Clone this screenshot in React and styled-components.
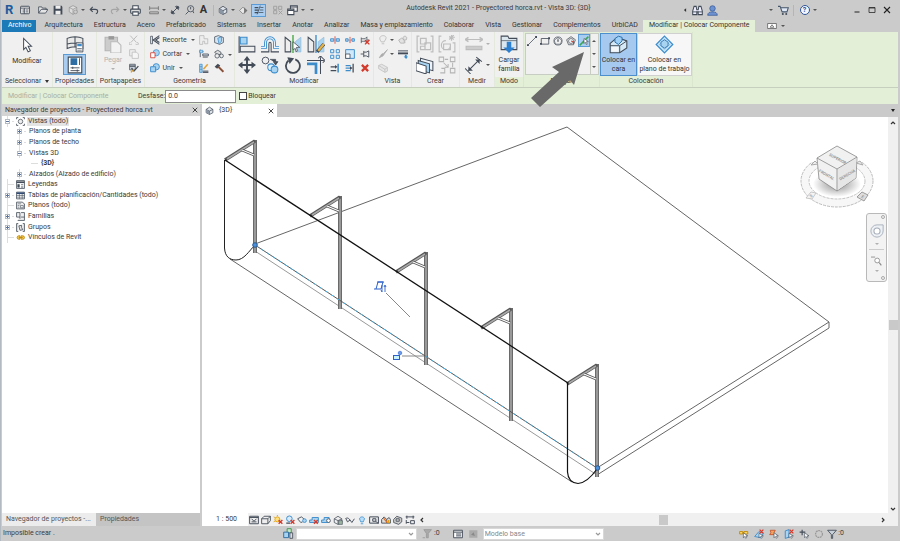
import { useState } from 'react';
import styled, { createGlobalStyle, css } from 'styled-components';

const GlobalStyle = createGlobalStyle`
  * {
    box-sizing: border-box;
  }

  body {
    margin: 0;
    background: #cbcbcb;
    color: #3a3a3a;
    font-family: Roboto, 'Open Sans', 'Liberation Sans', sans-serif;
    font-size: 7px;
    line-height: 9px;
  }

  button, input, select {
    font: inherit;
    color: inherit;
  }

  svg {
    display: block;
    flex: none;
  }
`;

const ink = '#424b57';
const blue = '#3c8ccb';
const sky = '#a8d4f2';
const mute = '#bdbdbd';
const red = '#d33a2c';

// every glyph is drawn on a 16 x 16 grid
const art = {
  window: <><rect x="1" y="2" width="14" height="12" rx="1" fill="#eee" stroke={ink} strokeWidth="1.5" /><path d="M1 5h14M4 8h3M4 11h3M9 8h4M9 11h4M7 5v9" stroke={ink} strokeWidth="1.3" /></>,
  open: <path d="M1 13V3h5l1 2h6v3M1 13l4-6h11l-4 6z" fill="#e4e4e4" stroke={ink} strokeWidth="1.3" />,
  save: <><path d="M1 1h13l1 2v12H1z" fill={ink} /><path d="M4 1h8v5H4zM4 9h8v6H4z" fill="#eee" /></>,
  sync: <><path d="M8 1l6 3v7l-6 4-6-4V4z" fill="#ddd" stroke="#888" /><path d="M2 4l6 3 6-3M8 7v8" fill="none" stroke="#888" /><circle cx="12" cy="11" r="3" fill="#ccc" stroke="#888" /></>,
  undo: <path d="M6 3L2 7l4 4M2 7h8c5 0 5 6 1 7" fill="none" stroke={ink} strokeWidth="1.8" />,
  redo: <path d="M10 3l4 4-4 4M14 7H6c-5 0-5 6-1 7" fill="none" stroke="#a4a4a4" strokeWidth="1.8" />,
  print: <><path d="M4 6V1h8v5" fill="#fff" stroke={ink} strokeWidth="1.5" /><rect x="1" y="6" width="14" height="6" rx="1" fill="#ddd" stroke={ink} strokeWidth="1.5" /><path d="M4 10h8v5H4z" fill="#fff" stroke={ink} strokeWidth="1.5" /></>,
  measure: <path d="M1 5h14M1 2v6M15 2v6M1 11h14v3H1z" fill="none" stroke="#777" strokeWidth="1.5" />,
  dimension: <><path d="M3 13L13 3" stroke={ink} strokeWidth="1.5" /><path d="M1 11l4 4M11 1l4 4" stroke={ink} strokeWidth="1.5" /><path d="M3 10v3h3zM10 3h3v3z" fill={ink} stroke={ink} strokeWidth="2" /></>,
  aligned: <><path d="M3 13L13 3" stroke={ink} strokeWidth="1" /><path d="M0 11l5 5M10 1l5 4" stroke={ink} strokeWidth=".9" /><path d="M3 9v4h4zM9 3h4v4z" fill={ink} /></>,
  tag: <><circle cx="9" cy="6" r="5" fill="none" stroke={ink} strokeWidth="1.3" /><path d="M9 3v4M6 10l-5 5M13 10l1 3" stroke={ink} strokeWidth="1.4" /></>,
  house: <><path d="M2 6l6-4 6 4v6l-6 3-6-3z" fill="#dfe4ea" stroke={ink} strokeWidth="1.3" /><path d="M2 6l6 3 6-3M8 9v6" fill="none" stroke={ink} strokeWidth="1.3" /><path d="M2 6l6 3v6l-6-3z" fill="#8b96a5" /></>,
  section: <><path d="M7 2l6 6-6 6-6-6z" fill="#e8e8e8" stroke="#777" strokeWidth="1.3" /><path d="M9 2l6 6-6 6z" fill="#777" /></>,
  thin: <><path d="M1 4h6M1 8h6M1 12h6" stroke={ink} strokeWidth="2" /><path d="M10 1L5 15M10 4h5M9 8h6M8 12h7" stroke={ink} strokeWidth="1.2" /></>,
  closeViews: <path d="M1 2h5v5H1zM9 2h5v5H9zM1 9h5v5H1zM9 9l6 6M15 9l-6 6" fill="none" stroke="#999" strokeWidth="1.3" />,
  switch: <><path d="M5 1h10v8H5z" fill="#eee" stroke={ink} strokeWidth="1.5" /><path d="M1 6h9v8H1z" fill="#fff" stroke={ink} strokeWidth="1.5" /><path d="M1 8h9M5 3h10" stroke={ink} strokeWidth="1.5" /></>,
  binoculars: <><path d="M1 9l2-7h3l1 5h2l1-5h3l2 7v5H9v-4H7v4H1z" fill="#eef" stroke={ink} strokeWidth="1.5" /><path d="M1 10h6M9 10h6" stroke={ink} strokeWidth="1.3" /></>,
  person: <><circle cx="8" cy="5" r="4" fill="#6e92cf" stroke="#2f5597" /><path d="M1 15c0-4 3-5 7-5s7 1 7 5z" fill="#6e92cf" stroke="#2f5597" /></>,
  cart: <><path d="M0 2h3l3 8h7l2-6H4" fill="#dfe8f7" stroke="#44546a" strokeWidth="1.5" /><circle cx="7" cy="13" r="1.5" fill={ink} /><circle cx="12" cy="13" r="1.5" fill={ink} /></>,
  min: <path d="M3 12h10" stroke="#222" strokeWidth="2" />,
  max: <path d="M2 3h12v10H2zM2 4h12" fill="none" stroke="#222" strokeWidth="1.5" />,
  close: <path d="M2 2l12 12M14 2L2 14" stroke="#222" strokeWidth="2.2" />,
  play: <path d="M1 4h14v8H1zM8 6l3 4H5z" fill="#fff" stroke="#555" strokeWidth="1.2" />,
  cursor: <path d="M5 3v10l2-2 2 4 2-1-2-4h3z" fill="#fff" stroke={ink} strokeWidth=".9" />,
  types: <><path d="M1 3c4-2 10-2 14 0v9c-4-2-10-2-14 0zM1 8c4-1 10-1 14 0M8 2v9" fill="#e9e9e9" stroke={ink} strokeWidth=".9" /><path d="M9 7h6v8H9z" fill="#fff" stroke={ink} strokeWidth=".8" /><path d="M10 8h4v2h-4z" fill={blue} /><path d="M10 12h4M10 13.500h4" stroke={ink} strokeWidth=".6" /></>,
  props: <><path d="M2 1h12v14H2z" fill="#fff" stroke={ink} strokeWidth="1" /><path d="M4 2h6v6H4z" fill="#2d6da3" /><path d="M12 2v6M4 10.500h8M4 13h8M6 9.500v2M10 12v2" stroke={ink} strokeWidth=".8" /></>,
  paste: <><path d="M1 2h11v12H1z" fill="#ccc" stroke="#b5b5b5" /><path d="M4 1h5v3H4z" fill="#999" /><path d="M6 6h6l3 3v7H6z" fill="#f2f2f2" stroke="#bbb" /></>,
  cut: <path d="M2 1l10 11M13 1L3 12M2 12a2 2 0 1 0 2 2M13 12a2 2 0 1 1-2 2" fill="none" stroke={mute} strokeWidth="1.6" />,
  copy: <><path d="M1 1h9v10H1z" fill="#eee" stroke={mute} strokeWidth="1.3" /><path d="M5 5h7l3 3v7H5z" fill="#f5f5f5" stroke={mute} strokeWidth="1.3" /></>,
  match: <><path d="M1 2h9v9H1z" fill="#cdd6df" stroke={ink} strokeWidth="1.2" /><path d="M1 5h9M4 8l4 5 7-8" fill="none" stroke={ink} strokeWidth="2" /><path d="M3 15l5-5" stroke="#d59a39" strokeWidth="2" /></>,
  cope: <><path d="M1 2h3v12H1z" fill="#eee" stroke={ink} strokeWidth="1.2" /><path d="M15 1L5 8l10 7M15 4L9 8l6 4" fill="none" stroke={ink} strokeWidth="1.7" /></>,
  cutGeo: <><circle cx="10" cy="6" r="5" fill={sky} stroke={blue} strokeWidth="1.2" /><path d="M1 6h7v8H1z" fill="#fff" stroke={red} strokeWidth="1.3" /></>,
  join: <><circle cx="10" cy="6" r="5" fill={sky} stroke={blue} strokeWidth="1.5" /><path d="M1 6h8v8H1z" fill={sky} stroke={blue} strokeWidth="1.5" /></>,
  opening: <path d="M1 1h7v5h6v8H9v-4H6v5H1z" fill="#eee" stroke={mute} strokeWidth="1.4" />,
  cube: <><path d="M1 3l6-2 8 3v8l-6 3-8-3z" fill="#d9e6f1" stroke={ink} strokeWidth="1.2" /><path d="M6 5l6-2v7l-4 4z" fill={sky} stroke={blue} strokeWidth="1.2" /></>,
  beam: <><path d="M2 1v12M1 4h6M6 8h9v3H6zM6 13h8" fill="#dce6ee" stroke={ink} strokeWidth="1.3" /><path d="M1 2h5v4H1z" fill={sky} stroke={blue} /></>,
  faces: <><path d="M1 5l5-3 5 3v4H5z" fill="#ddd" stroke={ink} strokeWidth="1.2" /><circle cx="5" cy="11" r="3.500" fill="#eee" stroke={ink} strokeWidth="1.2" /><circle cx="12" cy="11" r="3" fill="#eee" stroke={ink} strokeWidth="1.2" /></>,
  wall: <><path d="M1 2h4v13H1zM1 6h4M1 10h4" fill={sky} stroke={blue} strokeWidth="1.2" /><path d="M14 2L7 10" stroke="#e3a23c" strokeWidth="2.5" /><path d="M6 13h9M6 15h9" stroke={ink} strokeWidth="1.6" /></>,
  hammer: <><path d="M1 6l5-5 4 3-5 5z" fill={ink} /><path d="M7 6l8 8" stroke="#8a5038" strokeWidth="3" /></>,
  align: <><path d="M1 1v15" stroke={ink} strokeWidth="1" /><path d="M2 2h6v6H2z" fill={sky} stroke={blue} strokeWidth="1" /><path d="M2 10h13v5H2z" fill="#eee" stroke={ink} strokeWidth=".9" /></>,
  offset: <><path d="M0 11h4V7c0-6 8-6 8 0v4h4" fill="none" stroke={blue} strokeWidth="2.600" /><path d="M0 11h4V7c0-6 8-6 8 0v4h4" fill="none" stroke="#e8f4ff" strokeWidth="1" /><path d="M0 15h7V8c0-2 2-2 2 0v7h7" fill="none" stroke={ink} strokeWidth=".9" /></>,
  mirrorPick: <><path d="M1 2l5 4v9H1z" fill="#eee" stroke={ink} strokeWidth=".9" /><path d="M15 2l-5 4v9h5z" fill={sky} stroke="#9ac3de" strokeWidth=".8" /><path d="M8 0v16" stroke="#43a843" strokeWidth="1.2" /><path d="M8 6v7l2-1 1 3 1-1-1-3h3z" fill="#fff" stroke={ink} strokeWidth=".7" /></>,
  mirrorDraw: <><path d="M1 2l5 4v9H1z" fill="#eee" stroke={ink} strokeWidth=".9" /><path d="M15 2l-5 4v9h5z" fill={sky} stroke="#9ac3de" strokeWidth=".8" /><path d="M8 0v16" stroke={blue} strokeWidth="1.2" /><path d="M15 8l-6 7" stroke={ink} strokeWidth="3" /><path d="M15 8l-5 6" stroke="#e7b244" strokeWidth="2" /></>,
  move: <><path d="M8 2v12M2 8h12" stroke={ink} strokeWidth="1.7" /><path d="M8 0l3 4H5zM8 16l3-4H5zM0 8l4-3v6zM16 8l-4-3v6z" fill={ink} /></>,
  duplicate: <><circle cx="4" cy="4" r="3" fill="#eee" stroke={ink} strokeWidth=".8" /><path d="M8 3h5v3M11 5l2 3 2-3z" fill={ink} stroke={ink} strokeWidth=".7" /><circle cx="9" cy="10" r="3" fill="#dff0fd" stroke={blue} strokeWidth=".9" /><circle cx="12" cy="12" r="3" fill={sky} stroke={blue} strokeWidth=".9" /></>,
  rotate: <><path d="M10 3A6.200 6.200 0 1 1 4 4" fill="none" stroke={ink} strokeWidth="1.6" /><path d="M3 1l6 1-4 5z" fill={ink} /></>,
  trim: <><path d="M0 4h12v12" fill="none" stroke={ink} strokeWidth=".9" /><path d="M0 7h8v9" fill="none" stroke={blue} strokeWidth="2.4" /><path d="M12 4V1M10 2l2-2 2 2M12 4h3M14 2l2 2-2 2" fill="none" stroke={ink} strokeWidth=".9" /></>,
  split: <><path d="M1 6h5v4H1zM10 6h5v4h-5z" fill={sky} stroke={blue} strokeWidth="1.4" /><path d="M8 2v12" stroke={red} strokeWidth="1.3" /></>,
  splitGap: <><path d="M1 6h4v4H1zM11 6h4v4h-4z" fill={sky} stroke={blue} strokeWidth="1.4" /><path d="M8 3v3M8 9v4M6 8h4" stroke={red} strokeWidth="1.4" /></>,
  unpin: <><path d="M2 4v9M2 6h6l3-3v10l-3-3H2M11 8h4" fill="#eee" stroke={ink} strokeWidth="1.2" /><path d="M8 8l7 7M15 8l-7 7" stroke={red} strokeWidth="2.2" /></>,
  array: <path d="M1 1h5v5H1zM10 1h5v5h-5zM1 10h5v5H1zM10 10h5v5h-5z" fill="#e7f3fb" stroke={blue} strokeWidth="1.5" />,
  scale: <><path d="M1 1h14v14H1z" fill="#cfe8fa" stroke={blue} strokeWidth="1.5" /><path d="M1 8h7v7H1z" fill="#fff" stroke={ink} strokeWidth="1.3" /></>,
  pin: <path d="M1 8h5M6 3v10M6 5h4l4-2v10l-4-2H6" fill="#eee" stroke={ink} strokeWidth="1.4" />,
  extend: <><path d="M1 6h9M1 12h9" stroke={ink} strokeWidth="2" /><path d="M13 1v14" stroke={blue} strokeWidth="2.4" /><path d="M8 9l4-3-4-3z" fill={ink} /></>,
  extendMany: <><path d="M1 4h8M1 8h8M1 12h8" stroke={blue} strokeWidth="2" /><path d="M13 1v14" stroke={ink} strokeWidth="2" /><path d="M8 11l4-3-4-3z" fill={ink} /></>,
  remove: <path d="M3 3l10 10M13 3L3 13" stroke={red} strokeWidth="3.600" />,
  bulb: <path d="M5 11c0-2-3-3-2-7 2-4 9-4 10 0 0 4-3 5-3 7zM6 14h4" fill="#eee" stroke={mute} strokeWidth="1.4" />,
  hidden: <path d="M1 8l5-3 4 3v5H4zM8 5c0-4 6-4 6 0l-1 3h-4zM11 10v3" fill="#e3e3e3" stroke="#b5b5b5" strokeWidth="1.4" />,
  brush: <path d="M15 1l-6 6-3 1-4 6 6-3 2-3z" fill="#aaa" stroke="#b0b0b0" strokeWidth="1.4" />,
  linework: <><path d="M0 3h16" stroke={ink} strokeWidth="1.500" /><path d="M0 7h16" stroke={ink} strokeWidth="3" /><path d="M11 9h3v3h2l-3 4-4-4h2z" fill={blue} /></>,
  boxes: <path d="M1 4l5-2 9 5v6l-4 2-10-6zM1 4l10 6v5M11 10l4-3" fill="#e6e6e6" stroke={mute} strokeWidth="1.2" />,
  group: <path d="M3 1H1v14h2M13 1h2v14h-2M4 3h5v5H4zM4 10h4v3H4zM8 7h5v6H8z" fill="none" stroke={mute} strokeWidth="1.1" />,
  groupGear: <path d="M3 1H1v14h2M13 7h2v8h-2M7 5a4 4 0 1 0 4 4M10 2h5M12 0v5M10 1l4 3M14 0l-4 4M5 8h6v5H5z" fill="none" stroke={mute} strokeWidth="1" />,
  assembly: <><path d="M4 2l11 3v8L4 10z" fill="#edf3f8" stroke={ink} strokeWidth=".9" /><path d="M2 4l10 3v8L2 12z" fill={sky} stroke={ink} strokeWidth=".9" /><path d="M0 6l9 3v7l-9-3z" fill="#fff" stroke={ink} strokeWidth=".9" /></>,
  parts: <path d="M1 1h4v4H1zM11 1h4v4h-4zM11 11h4v4h-4zM6 3h3M5 6l4 4M9 7v3H6M13 6v4M3 11h3v4H2" fill="none" stroke="#b4b4b4" strokeWidth=".9" />,
  rule: <path d="M0 4h16M3 2L0 4l3 2M13 2l3 2-3 2M1 10h14v3H1z" fill="#ccc" stroke={mute} strokeWidth="1" />,
  load: <><path d="M1 1h6l1 2h7v10H1z" fill="#dbe6ee" stroke={ink} strokeWidth=".9" /><path d="M1 5h14" stroke={ink} strokeWidth=".6" /><path d="M6 6h4v5h3l-5 5-5-5h3z" fill="#2d7fd0" /></>,
  line: <><path d="M2 14L14 2" stroke={ink} strokeWidth="1.2" /><path d="M0 13h3v3H0zM13 0h3v3h-3z" fill={ink} /></>,
  rect: <><path d="M2 4h12v9H2z" fill="none" stroke={ink} strokeWidth="1.3" /><path d="M0 11h3v3H0zM13 2h3v3h-3z" fill={ink} /></>,
  polyIn: <><circle cx="8" cy="8" r="6.500" fill="none" stroke={ink} strokeWidth="1.1" /><path d="M8 2l6 5-2 6H4L2 7z" fill="none" stroke={ink} strokeWidth=".9" /><path d="M8 4v5M7 8h2" stroke={ink} strokeWidth="1.4" /></>,
  polyOut: <><path d="M8 1l7 5-3 8H4L1 6z" fill="none" stroke={ink} strokeWidth="1.2" /><circle cx="8" cy="8" r="4" fill="none" stroke={ink} /><path d="M8 8l5 2M12 9v4" stroke={red} strokeWidth="1.6" /></>,
  pick: <><path d="M1 15L15 1" stroke="#3aa655" strokeWidth="2.4" /><path d="M8 4v8l2-2 2 4 1-1-1-4h3z" fill="#fff" stroke={ink} strokeWidth="1" /></>,
  face: <><path d="M1 7l6-5 8 3v6l-6 4H1z" fill="#d5e8f6" stroke={ink} strokeWidth=".9" /><path d="M1 9h8l6-4M9 9v6" fill="none" stroke={ink} strokeWidth=".8" /><path d="M2 10h6v4H2z" fill="#f4f6f8" /><path d="M5 3l3-2 3 1v3L8 8 5 6z" fill="#9fd0f7" stroke="#286fae" strokeWidth=".8" /></>,
  plane: <><path d="M8 1l7 7-7 7-7-7z" fill="#c3e3f8" stroke={blue} strokeWidth="1" /><path d="M8 4l4 4-4 4-4-4z" fill="#e8f5ff" stroke="#69a8d6" strokeWidth=".7" /><path d="M5 6l3-2 3 2v3l-3 2-3-2z" fill={sky} stroke="#286fae" strokeWidth=".7" /></>,
  views: <><circle cx="8" cy="8" r="4" fill="#eee" stroke={ink} strokeWidth="1.3" /><path d="M1 4V1h3M12 1h3v3M15 12v3h-3M4 15H1v-3" fill="none" stroke={ink} strokeWidth="1.4" /></>,
  legend: <><path d="M1 1h14v14H1z" fill="#fff" stroke={ink} strokeWidth="1.4" /><path d="M1 4h14" stroke={ink} strokeWidth="3" /><path d="M3 8h3v5H3zM9 8h4M9 11h4M9 13h4" fill={ink} stroke={ink} /></>,
  table: <><path d="M1 2h14v12H1z" fill="#fff" stroke={ink} strokeWidth="1.4" /><path d="M1 4h14" stroke="#2f4c77" strokeWidth="3" /><path d="M1 8h14M1 11h14M6 4v10M11 4v10" stroke={ink} /></>,
  sheet: <><path d="M1 2h10l4 3v9H1z" fill="#eee" stroke={ink} strokeWidth="1.4" /><path d="M3 5h6M8 8h5v4H8zM3 8h3M3 11h3" fill="none" stroke={ink} /></>,
  family: <path d="M1 1h6v8H1zM9 1h6v14H3M9 9h6M7 12V9" fill="#eee" stroke={ink} strokeWidth="1.4" />,
  groups: <path d="M4 1H1v14h3M12 1h3v14h-3M5 5l5-1v4l2 4-5 1z" fill="#e3e3e3" stroke={ink} strokeWidth="1.4" />,
  link: <path d="M5 5h2v6H5a3 3 0 0 1 0-6zM9 5h3a3 3 0 0 1 0 6H9zM5 8h7" fill="#f6cf4e" stroke="#c08a12" strokeWidth="1.700" />,
  detail: <><path d="M1 2h14v12H1z" fill="#eee" stroke={ink} strokeWidth="1.5" /><path d="M1 4h14M4 6l4 4 4-4M4 11h8" fill="none" stroke={ink} strokeWidth="1.5" /></>,
  style: <path d="M1 6l4-4h10v7l-4 5H1zM1 6h10v8M11 6l4-4" fill="#eee" stroke={ink} strokeWidth="1.4" />,
  sun: <><circle cx="7" cy="7" r="4" fill="#ffe27a" stroke="#e0a21b" strokeWidth="1.5" /><path d="M7 0v2M1 3l2 1M1 11l2-1" stroke="#e0a21b" strokeWidth="1.5" /><path d="M9 8l6 6M15 8l-6 6" stroke={red} strokeWidth="2.2" /></>,
  shadow: <><circle cx="7" cy="6" r="4.500" fill="#d7ecfa" stroke={blue} strokeWidth="1.5" /><path d="M2 13h6" stroke={ink} strokeWidth="2" /><path d="M9 8l6 6M15 8l-6 6" stroke={red} strokeWidth="2.2" /></>,
  crop: <><path d="M1 6l6-3 4 3v3M1 6l5 6 3-1" fill="none" stroke={ink} strokeWidth="1.4" /><circle cx="12" cy="9" r="3" fill={sky} stroke={blue} strokeWidth="1.3" /></>,
  cropOff: <><path d="M1 12V8h4V4h10v8z" fill={sky} stroke={blue} strokeWidth="1.5" /><path d="M8 8l6 6M14 8l-6 6" stroke={red} strokeWidth="2.2" /></>,
  cropOn: <><path d="M1 12V8h4V4h8v8z" fill={sky} stroke={blue} strokeWidth="1.5" /><circle cx="12" cy="9" r="3" fill="#fff" stroke={ink} strokeWidth="1.3" /></>,
  lock3d: <><path d="M2 6l6-4 6 4v6l-6 3-6-3zM2 6l6 3 6-3M8 9v6" fill="#eee" stroke={ink} strokeWidth="1.2" /><path d="M9 9h6v6H9z" fill="#9cb6a0" stroke={ink} /></>,
  glasses: <path d="M1 5l3 6 4-3 3 4 4-6M2 5c2-1 5 1 6 3" fill="none" stroke={ink} strokeWidth="1.5" />,
  reveal: <path d="M6 11c0-2-2-3-2-5 1-4 7-4 8 0 0 2-2 3-2 5zM6 14h4" fill="#b8defa" stroke={blue} strokeWidth="1.3" />,
  camera: <><path d="M1 3h14v10H1z" fill="#eee" stroke={ink} strokeWidth="1.6" /><path d="M6 6h5v4H6zM11 10l4 4" fill="none" stroke={ink} strokeWidth="1.6" /></>,
  analytic: <><path d="M1 13V7l4-4 4 4v6zM9 7l4-3 2 3v6H9" fill="#ddd" stroke={ink} strokeWidth="1.4" /><path d="M4 5l6 7" stroke="#e36d22" strokeWidth="2" /><path d="M12 8v5" stroke="#e0a21b" strokeWidth="2" /></>,
  dispSet: <path d="M1 7l5-5 8 3v6l-5 4-8-3zM5 6h5v4H5z" fill="#ccc" stroke={ink} strokeWidth="1.3" />,
  constraints: <path d="M1 3h14M3 1v5M13 1v5M2 8v6M2 12h5M9 9h6v5H9z" fill="none" stroke={ink} strokeWidth="1.5" />,
  workset: <><path d="M6 1h6v6H6z" fill="#c7e9c9" stroke="#39914a" strokeWidth="1.3" /><path d="M1 6h7v8H1z" fill={sky} stroke="#28679e" strokeWidth="1.3" /><path d="M10 7h4v8h-4z" fill="#ddd" stroke={ink} strokeWidth="1.2" /></>,
  editable: <path d="M3 1h12l-5 6v7H7V7zM1 14h4" fill="#aaa" stroke="#999" strokeWidth="1.4" />,
  option: <><path d="M1 2h14v12H1z" fill="#fff" stroke={ink} strokeWidth="1.5" /><path d="M1 5h14M5 8h8M5 11h8" stroke={ink} strokeWidth="1.6" /></>,
  optionOff: <><path d="M2 2h13v12H2z" fill="#aaa" /><path d="M5 9l4-4 2 6z" fill="#888" /></>,
  selLink: <><path d="M1 4h5v4H1zM8 4h6v4H8z" fill="#ffd860" stroke="#c18d13" strokeWidth="1.5" /><path d="M7 6v8l2-2 2 3 1-1-1-3h3z" fill="#fff" stroke={ink} /></>,
  selUnder: <><path d="M1 12L8 4l7 3-4 7z" fill={sky} stroke={blue} strokeWidth="1.4" /><path d="M9 1l6 6M15 1L9 7" stroke={red} strokeWidth="2" /><path d="M8 7v7l2-2 2 3 1-1-1-3h3z" fill="#fff" stroke={ink} /></>,
  selPin: <><path d="M2 2h8l-2 4 2 3H1l2-3z" fill="#f5a35c" stroke="#c3502a" strokeWidth="1.3" /><path d="M8 6v8l2-2 2 3 1-1-1-3h3z" fill="#fff" stroke={ink} /></>,
  selFace: <><path d="M2 3l6-2v12l-6 2z" fill={sky} stroke={blue} strokeWidth="1.5" /><path d="M9 1l6 6M15 1L9 7" stroke={red} strokeWidth="2" /><path d="M8 7v7l2-2 2 3 1-1-1-3h3z" fill="#fff" stroke={ink} /></>,
  drag: <><path d="M5 1v9M1 5h9" stroke={ink} strokeWidth="1.8" /><path d="M9 6v8l2-2 2 3 1-1-1-3h3z" fill="#fff" stroke={ink} /></>,
  ring: <circle cx="8" cy="8" r="5.500" fill="none" stroke="#999" strokeWidth="2" strokeDasharray="3 1" />,
  filter: <path d="M1 2h14L9 9v6H7V9z" fill="#c8d1da" stroke={ink} strokeWidth="1.4" />,
  wheel: <><path d="M8 1h7v7a7 7 0 1 1-7-7z" fill="#edf0f4" stroke="#a4acb8" /><circle cx="8" cy="8" r="3.500" fill="#fff" stroke="#a4acb8" strokeWidth="1.2" /></>,
  zoom: <><path d="M0 3h6" stroke="#999" strokeWidth="1.5" /><circle cx="9" cy="8" r="3.500" fill="#fff" stroke="#888" strokeWidth="1.2" /><path d="M12 11l3 4" stroke="#888" strokeWidth="1.6" /></>,
  left: <path d="M11 3v10L5 8z" fill="#333" />,
};

const Icon = ({ name, size = 10 }) => (
  <svg width={size} height={size} viewBox="0 0 16 16" fill="none" aria-hidden="true">{art[name]}</svg>
);

const Window = styled.div`
  min-height: 100vh;
  display: flex;
  flex-direction: column;
  padding: 0 2px 0 1px;
  border-left: 1px solid #b4bac2;
`;

const TitleBar = styled.header`
  height: 20px;
  display: flex;
  align-items: center;
  padding: 0 4px 0 3px;
`;

const TitleText = styled.h1`
  flex: 1;
  margin: 0;
  padding-bottom: 3px;
  text-align: center;
  font-size: 7px;
  line-height: 9px;
  font-weight: 400;
  white-space: nowrap;
`;

const Tools = styled.div`
  display: flex;
  align-items: center;
`;

const ToolButton = styled.button`
  display: flex;
  align-items: center;
  justify-content: center;
  width: ${(p) => p.$w || 15}px;
  height: ${(p) => p.$h || 14}px;
  padding: 0;
  border: 1px solid ${(p) => (p.$on ? '#5b9bd5' : 'transparent')};
  background: ${(p) => (p.$on ? '#a9cdf0' : 'none')};
  color: ${(p) => (p.disabled ? '#b0b0b0' : '#333')};
`;

const Logo = styled.strong`
  width: 14px;
  color: #1c5c9e;
  font-size: 13px;
  line-height: 14px;
`;

const BigLetter = styled.span`
  font-size: 11px;
  line-height: 12px;
  font-weight: 700;
`;

const Gap = styled.span`
  width: ${(p) => p.$w}px;
`;

const Separator = styled.span`
  width: 1px;
  height: 11px;
  background: #b5b5b5;
`;

const Caret = styled.span`
  width: 0;
  height: 0;
  margin: 0 auto;
  border: 2px solid transparent;
  border-top-color: ${(p) => (p.$muted ? '#b0b0b0' : '#555')};
  border-bottom: 0;
`;

const CaretUp = styled(Caret)`
  border-bottom: 2px solid #555;
  border-top: 0;
`;

const CaretBox = styled.span`
  display: flex;
  width: ${(p) => p.$w || 6}px;
`;

const InlineCaret = styled.span`
  display: inline-block;
  margin-left: 2px;
  border: 2px solid transparent;
  border-top: 3px solid #333;
  border-bottom: 0;
  vertical-align: middle;
`;

const TabCaret = styled(InlineCaret)`
  border-top-color: #222;
  outline: 0;
`;

const HelpBadge = styled.span`
  width: 10px;
  height: 10px;
  border: 1px solid #2f5597;
  border-radius: 5px;
  background: #f3f7ff;
  color: #1f4e9c;
  font-weight: 700;
  line-height: 8px;
  text-align: center;
`;

const TabBar = styled.nav`
  display: flex;
  height: 12px;
`;

const Tab = styled.a`
  padding: 1px 5px 0 6px;
  margin-right: ${(p) => (p.$file ? 2 : 0)}px;
  color: ${(p) => (p.$file ? '#fff' : '#333')};
  background: ${(p) => (p.$file ? '#1d7ab8' : p.$active ? '#e3efd7' : 'none')};
  text-decoration: none;
  white-space: nowrap;
`;

const Ribbon = styled.section`
  display: flex;
  height: 56px;
  background: #e3efd7;
  border-bottom: 1px solid #c6cfbd;
`;

const PanelBox = styled.div`
  width: ${(p) => p.$w}px;
  display: flex;
  flex-direction: column;
  border-right: 1px solid ${(p) => (p.$green ? '#dae6ce' : '#e3e9dd')};
  background: ${(p) => (p.$green ? '#e3efd7' : '#f0f0f0')};
`;

const PanelBody = styled.div`
  height: 45px;
  padding-top: 1px;
  display: flex;
  justify-content: center;
  background: ${(p) => (p.$green && !p.$flat ? '#f0f0f0' : 'none')};
`;

const PanelLabel = styled.div`
  text-align: center;
  white-space: nowrap;
`;

const Column = styled.div`
  display: flex;
  flex-direction: column;
  align-items: ${(p) => p.$align || 'center'};
`;

const IconGrid = styled.div`
  display: grid;
  grid-template-columns: repeat(${(p) => p.$cols}, ${(p) => p.$cell}px);
  grid-auto-rows: ${(p) => p.$row}px;
`;

const LargeButton = styled.button`
  display: flex;
  flex-direction: column;
  align-items: center;
  width: ${(p) => p.$w}px;
  height: 43px;
  padding: 1px 0 0;
  gap: ${(p) => p.$gap || 2}px;
  border: 1px solid transparent;
  background: none;
  color: ${(p) => (p.disabled ? '#b0b0b0' : '#333')};
  white-space: nowrap;

  ${(p) => p.$place && css`
    border-color: ${p.$on ? '#4c8fcf' : '#d0d0d0'};
    background: ${p.$on ? '#a6caef' : '#f7f7f7'};
  `}
`;

const RowButton = styled.button`
  display: flex;
  align-items: center;
  gap: 3px;
  width: 50px;
  height: 14px;
  padding: 0 0 0 3px;
  border: 0;
  background: none;
`;

const Gallery = styled.div`
  display: flex;
  width: 74px;
  height: 42px;
  border: 1px solid #c8cdc4;
  background: #f0f0f0;
`;

const GalleryItems = styled.div`
  flex: 1;
  display: flex;
`;

const GalleryScroll = styled.div`
  display: grid;
  grid-template-rows: repeat(3, 1fr);
  width: 9px;
  border-left: 1px solid #c8cdc4;
`;

const Arrow = styled.svg`
  position: absolute;
  left: 530px;
  top: 52px;
  pointer-events: none;
`;

const OptionsBar = styled.form`
  display: flex;
  align-items: center;
  height: 16px;
  background: #e3efd7;
  padding-left: 6px;
`;

const Context = styled.span`
  width: 130px;
  color: #a9aea4;
`;

const OffsetField = styled.input`
  width: 71px;
  height: 13px;
  margin-right: 3px;
  padding: 0 2px;
  border: 1px solid #8a8a8a;
  background: #fff;
`;

const Check = styled.input`
  appearance: none;
  width: 8px;
  height: 8px;
  margin: 0 1px 0 0;
  border: 1px solid #444;
  background: #fff;
`;

const Workspace = styled.main`
  flex: 1;
  display: flex;
  gap: 2px;
`;

const Browser = styled.aside`
  width: 198px;
  display: flex;
  flex-direction: column;
  background: #fff;
`;

const BrowserHead = styled.div`
  display: flex;
  justify-content: space-between;
  align-items: center;
  height: 12px;
  padding: 0 0 0 3px;
  background: #d4d4d4;
`;

const Tree = styled.ul`
  display: grid;
  grid-auto-rows: 1fr;
  height: 127px;
  margin: 0;
  padding: 0 0 0 2px;
  list-style: none;
`;

const TreeRow = styled.li`
  display: flex;
  align-items: center;
  font-weight: ${(p) => (p.$bold ? 700 : 400)};
`;

const Branch = styled.span`
  display: flex;
  align-items: center;
  align-self: stretch;
  width: 12px;
  padding-left: 1px;
  background: ${(p) => (p.$line ? 'linear-gradient(#ddd, #ddd) 3px 0 / 1px 100% no-repeat' : 'none')};

  &::after {
    content: '';
    flex: 1;
    height: 1px;
    margin: 0 2px;
    background: ${(p) => (p.$dash ? '#ddd' : 'none')};
  }
`;

const Toggle = styled.button`
  width: 5px;
  height: 5px;
  padding: 0;
  border: 1px solid #b4bac2;
  background:
    linear-gradient(#5a7396, #5a7396) center / 3px 1px no-repeat,
    ${(p) => (p.$open ? '' : 'linear-gradient(#5a7396, #5a7396) center / 1px 3px no-repeat,')}
    linear-gradient(#fff, #fff);
`;

const TreeLabel = styled.span`
  padding: 0 1px;
  margin-left: ${(p) => (p.$icon ? 2 : 0)}px;
  background: ${(p) => (p.$selected ? '#e4e4e4' : 'none')};
  white-space: nowrap;
`;

const PaneTabs = styled.div`
  display: flex;
  height: 13px;
  margin-top: auto;
  background: #c4c4c4;
`;

const PaneTab = styled.button`
  padding: 0 4px;
  width: ${(p) => (p.$on ? 94 : 60)}px;
  border: 0;
  background: ${(p) => (p.$on ? '#ececec' : 'none')};
  color: #555;
  text-align: left;
  white-space: nowrap;
`;

const ViewArea = styled.section`
  flex: 1;
  display: flex;
  flex-direction: column;
  min-width: 0;
`;

const ViewTabs = styled.div`
  display: flex;
  align-items: center;
  justify-content: space-between;
  height: 13px;
  background: #cacaca;
`;

const ViewTab = styled.div`
  display: flex;
  align-items: center;
  gap: 5px;
  width: 75px;
  height: 13px;
  padding-left: 3px;
  background: #fff;

  button {
    margin-left: auto;
  }
`;

const ViewBody = styled.div`
  flex: 1;
  display: flex;
  min-height: 0;
`;

const Canvas = styled.div`
  position: relative;
  flex: 1;
  display: flex;
  background: #fff;
`;

const Drawing = styled.svg`
  flex: 1;
  min-width: 0;
`;

const NavBar = styled.div`
  position: absolute;
  right: 1px;
  top: 96px;
  width: 21px;
  height: 69px;
  display: flex;
  flex-direction: column;
  align-items: center;
  justify-content: space-between;
  padding: 1px;
  border: 1px solid #b9b9b9;
  border-radius: 3px;
  background: #f3f3f3;
`;

const NavDot = styled.span`
  align-self: flex-end;
  width: 4px;
  height: 4px;
  border: 1px solid #aaa;
  border-radius: 2px;
`;

const NavRule = styled.span`
  width: 15px;
  height: 1px;
  background: #ccc;
`;

const ScrollColumn = styled.div`
  width: 10px;
  display: flex;
  flex-direction: column;
  align-items: center;
  padding: 3px 0 1px;
  background: #f0f0f0;
`;

const Thumb = styled.span`
  width: 9px;
  height: 10px;
  background: #c9c9c9;
`;

const Chevron = ({ turn = 0, color = '#333' }) => (
  <svg width="6" height="6" viewBox="0 0 6 6"><path d="M1 2l2 2 2-2" fill="none" stroke={color} strokeWidth="1.200" transform={`rotate(${turn} 3 3)`} /></svg>
);

const ViewControls = styled.div`
  display: flex;
  align-items: center;
  height: 13px;
  padding: 0 12px 0 0;
  background: #f0f0f0;
`;

const Scale = styled.button`
  width: 46px;
  height: 13px;
  padding: 0 11px 0 0;
  border: 0;
  background: #fff;
  text-align: right;
  white-space: nowrap;
`;

const ScrollTrack = styled.div`
  flex: 1;
  display: flex;
  align-items: center;
`;

const StatusBar = styled.footer`
  display: flex;
  align-items: center;
  height: 15px;
  padding: 0 52px 0 1px;
`;

const Message = styled.span`
  width: 278px;
`;

const SelectBox = styled.div`
  display: flex;
  align-items: center;
  width: 121px;
  height: 12px;
  padding-right: 2px;
  background: #fff;
  border: 1px solid #d8d8d8;

  select {
    flex: 1;
    height: 10px;
    padding: 0 1px;
    border: 0;
    appearance: none;
    background: none;
    color: #888;
    line-height: 10px;
  }
`;

const Push = styled.span`
  flex: ${(p) => p.$grow || 1};
`;

const Tool = ({ name, size, ...rest }) => (
  <ToolButton type="button" aria-label={name} {...rest}><Icon name={name} size={size} /></ToolButton>
);

const Panel = ({ label, w, green, flat, children }) => (
  <PanelBox $w={w} $green={green}>
    <PanelBody $green={green} $flat={flat}>{children}</PanelBody>
    <PanelLabel>{label}</PanelLabel>
  </PanelBox>
);

const tabs = ['Arquitectura', 'Estructura', 'Acero', 'Prefabricado', 'Sistemas', 'Insertar', 'Anotar', 'Analizar',
  'Masa y emplazamiento', 'Colaborar', 'Vista', 'Gestionar', 'Complementos', 'UrbiCAD'];

const tree = [
  { label: 'Vistas (todo)', icon: 'views', toggle: 'open', selected: true },
  { label: 'Planos de planta', depth: 1, toggle: 'closed' },
  { label: 'Planos de techo', depth: 1, toggle: 'closed' },
  { label: 'Vistas 3D', depth: 1, toggle: 'open' },
  { label: '{3D}', depth: 2, bold: true },
  { label: 'Alzados (Alzado de edificio)', depth: 1, toggle: 'closed' },
  { label: 'Leyendas', icon: 'legend' },
  { label: 'Tablas de planificación/Cantidades (todo)', icon: 'table', toggle: 'closed' },
  { label: 'Planos (todo)', icon: 'sheet' },
  { label: 'Familias', icon: 'family', toggle: 'closed' },
  { label: 'Grupos', icon: 'groups', toggle: 'closed' },
  { label: 'Vínculos de Revit', icon: 'link' },
];

const viewTools = ['detail', 'style', 'sun', 'shadow', 'crop', 'cropOff', 'cropOn', 'lock3d', 'glasses', 'reveal',
  'camera', 'analytic', 'dispSet', 'constraints'];

const TitleRow = () => (
  <TitleBar>
    <Tools>
      <Logo>R</Logo>
      <Tool name="window" $w={12} />
      <Gap $w={4} />
      <Tool name="open" />
      <Tool name="save" />
      <Tool name="sync" disabled />
      <CaretBox $w={6}><Caret /></CaretBox>
      <Tool name="undo" />
      <CaretBox $w={6}><Caret /></CaretBox>
      <Tool name="redo" disabled />
      <CaretBox $w={6}><Caret /></CaretBox>
      <Tool name="print" size={11} />
      <Gap $w={3} />
      <Tool name="measure" />
      <CaretBox $w={6}><Caret /></CaretBox>
      <Tool name="dimension" />
      <Tool name="tag" />
      <ToolButton type="button" $w={13}><BigLetter>A</BigLetter></ToolButton>
      <Gap $w={3} />
      <Separator />
      <Gap $w={1} />
      <Tool name="house" />
      <CaretBox $w={6}><Caret /></CaretBox>
      <Tool name="section" size={9} />
      <Tool name="thin" $on $h={13} />
      <Gap $w={4} />
      <Tool name="closeViews" />
      <Tool name="switch" size={11} />
      <CaretBox><Caret /></CaretBox>
      <Gap $w={3} />
      <CaretBox><Caret /></CaretBox>
    </Tools>
    <TitleText>Autodesk Revit 2021 - Proyectored horca.rvt - Vista 3D: {'{3D}'}</TitleText>
    <Tools>
      <Icon name="left" size={6} />
      <Gap $w={2} />
      <Tool name="binoculars" size={11} />
      <Tool name="person" size={11} />
      <Gap $w={48} />
      <CaretBox><Caret /></CaretBox>
      <Gap $w={2} />
      <Tool name="cart" size={11} />
      <Gap $w={2} />
      <Separator />
      <Gap $w={3} />
      <ToolButton type="button"><HelpBadge>?</HelpBadge></ToolButton>
      <CaretBox><Caret /></CaretBox>
      <Gap $w={31} />
      <Tool name="min" size={8} />
      <Tool name="max" size={8} />
      <Tool name="close" size={8} />
    </Tools>
  </TitleBar>
);

const RibbonBar = () => (
  <Ribbon>
    <Panel label={<>Seleccionar <InlineCaret /></>} w={51}>
      <LargeButton type="button" $w={44} $gap={4}><Icon name="cursor" size={18} />Modificar</LargeButton>
    </Panel>
    <Panel label="Propiedades" w={44}>
      <Column>
        <Tool name="types" size={18} $w={22} $h={21} />
        <Tool name="props" size={18} $w={23} $h={21} $on />
      </Column>
    </Panel>
    <Panel label="Portapapeles" w={48}>
      <LargeButton type="button" $w={26} $gap={3} disabled>
        <Icon name="paste" size={18} />Pegar<Caret $muted />
      </LargeButton>
      <IconGrid $cols={1} $cell={15} $row={14}>
        <Tool name="cut" disabled />
        <Tool name="copy" disabled />
        <Tool name="match" />
      </IconGrid>
    </Panel>
    <Panel label="Geometría" w={90}>
      <Column $align="flex-start">
        <RowButton type="button"><Icon name="cope" />Recorte<CaretBox><Caret /></CaretBox></RowButton>
        <RowButton type="button"><Icon name="cutGeo" />Cortar<CaretBox><Caret /></CaretBox></RowButton>
        <RowButton type="button"><Icon name="join" />Unir<CaretBox><Caret /></CaretBox></RowButton>
      </Column>
      <IconGrid $cols={2} $cell={15} $row={14}>
        <Tool name="opening" disabled />
        <Tool name="cube" />
        <Tool name="beam" />
        <Tool name="faces" />
        <Tool name="wall" />
        <Tool name="hammer" />
      </IconGrid>
      <Tools><CaretBox><Caret /></CaretBox></Tools>
    </Panel>
    <Panel label="Modificar" w={139}>
      <IconGrid $cols={4} $cell={23} $row={21}>
        {['align', 'offset', 'mirrorPick', 'mirrorDraw', 'move', 'duplicate', 'rotate', 'trim'].map((n) => (
          <Tool key={n} name={n} size={18} $w={23} $h={21} />
        ))}
      </IconGrid>
      <IconGrid $cols={3} $cell={15} $row={14}>
        {['split', 'splitGap', 'unpin', 'array', 'scale', 'pin', 'extend', 'extendMany', 'remove'].map((n) => (
          <Tool key={n} name={n} />
        ))}
      </IconGrid>
    </Panel>
    <Panel label="Vista" w={38}>
      <IconGrid $cols={1} $cell={14} $row={14}>
        <Tool name="bulb" disabled />
        <Tool name="brush" disabled />
        <Tool name="boxes" disabled />
      </IconGrid>
      <IconGrid $cols={2} $cell={6} $row={14}>
        <Tools><CaretBox><Caret /></CaretBox></Tools>
        <Tool name="hidden" disabled />
        <Tools><CaretBox><Caret /></CaretBox></Tools>
        <Tool name="linework" />
      </IconGrid>
      <Gap $w={9} />
    </Panel>
    <Panel label="Crear" w={48}>
      <IconGrid $cols={2} $cell={22} $row={21}>
        <Tool name="group" size={18} $w={22} $h={21} disabled />
        <Tool name="groupGear" size={18} $w={22} $h={21} disabled />
        <Tool name="assembly" size={18} $w={22} $h={21} />
        <Tool name="parts" size={18} $w={22} $h={21} disabled />
      </IconGrid>
    </Panel>
    <Panel label="Medir" w={35}>
      <IconGrid $cols={1} $cell={22} $row={21}>
        <Tool name="rule" size={18} $w={22} $h={21} disabled />
        <Tool name="aligned" size={18} $w={22} $h={21} />
      </IconGrid>
      <IconGrid $cols={1} $cell={7} $row={21}>
        <Tools><CaretBox><Caret $muted /></CaretBox></Tools>
        <Tools><CaretBox><Caret /></CaretBox></Tools>
      </IconGrid>
    </Panel>
    <Panel label="Modo" w={29} green>
      <LargeButton type="button" $w={28} $gap={3}><Icon name="load" size={18} /><span>Cargar<br />familia</span></LargeButton>
    </Panel>
    <Panel label="Dibujar" w={76} green flat>
      <Gallery>
        <GalleryItems>
          <Tool name="line" $w={13} />
          <Tool name="rect" $w={13} />
          <Tool name="polyIn" $w={13} />
          <Tool name="polyOut" $w={13} />
          <Tool name="pick" $w={12} $h={13} $on />
        </GalleryItems>
        <GalleryScroll>
          <Tools><CaretUp /></Tools>
          <Tools><Caret /></Tools>
          <Tools><Caret /></Tools>
        </GalleryScroll>
      </Gallery>
    </Panel>
    <Panel label="Colocación" w={93} green flat>
      <LargeButton type="button" $w={37} $place $on><Icon name="face" size={19} /><span>Colocar en<br />cara</span></LargeButton>
      <LargeButton type="button" $w={55} $place><Icon name="plane" size={19} /><span>Colocar en<br />plano de trabajo</span></LargeButton>
    </Panel>
  </Ribbon>
);

const ProjectBrowser = () => (
  <Browser>
    <BrowserHead>
      Navegador de proyectos - Proyectored horca.rvt
      <Tool name="close" size={6} $w={11} $h={10} />
    </BrowserHead>
    <Tree>
      {tree.map((row) => (
        <TreeRow key={row.label} $bold={row.bold}>
          <Branch $line={!row.depth} $dash={!row.depth}>
            {!row.depth && row.toggle && <Toggle type="button" aria-label={row.label} $open={row.toggle === 'open'} />}
          </Branch>
          {row.depth >= 1 && (
            <Branch $line={row.depth === 1} $dash={row.depth === 1}>
              {row.toggle && <Toggle type="button" aria-label={row.label} $open={row.toggle === 'open'} />}
            </Branch>
          )}
          {row.depth === 2 && <Branch $dash />}
          {row.icon && <Icon name={row.icon} size={9} />}
          <TreeLabel $icon={row.icon} $selected={row.selected}>{row.label}</TreeLabel>
        </TreeRow>
      ))}
    </Tree>
    <PaneTabs>
      <PaneTab type="button" $on>Navegador de proyectos -...</PaneTab>
      <PaneTab type="button">Propiedades</PaneTab>
    </PaneTabs>
  </Browser>
);

// five gallows posts, evenly spaced along the slab edge
const posts = [[255, 140], [340, 196], [426, 252], [511, 308], [597, 364]];

const Post = ({ x, y }) => (
  <g>
    <path d={`M${x} ${y}v113`} stroke="#6a6a6a" strokeWidth="4" />
    <path d={`M${x} ${y + 2}v111`} stroke="#999" strokeWidth="2" />
    <path d={`M${x - 30} ${y + 20}l30 -19`} stroke="#555" strokeWidth="3.400" />
    <path d={`M${x - 28} ${y + 19}l27 -17`} stroke="#aaa" strokeWidth="1.500" />
    <path d={`M${x - 13} ${y + 10}l12 5`} stroke="#555" strokeWidth="2.800" />
    <path d={`M${x - 13} ${y + 10}l12 5`} stroke="#fff" strokeWidth="1.200" />
  </g>
);

const CubeText = styled.text`
  font-size: 4px;
  font-weight: 700;
  fill: #999;
  text-anchor: middle;
`;

const ViewCube = () => (
  <g>
    <defs>
      <radialGradient id="cubeShade"><stop offset="40%" stopColor="#bbb" /><stop offset="100%" stopColor="#fff" /></radialGradient>
    </defs>
    <ellipse cx="837" cy="181" rx="36" ry="26" fill="#f7f7f7" stroke="#bbb" strokeDasharray="3 1" />
    <ellipse cx="837" cy="181" rx="28" ry="18" fill="#fff" stroke="#c4c4c4" strokeDasharray="3 1" />
    <ellipse cx="837" cy="184" rx="24" ry="13" fill="url(#cubeShade)" />
    <path d="M810 153h54v9h-54z" fill="#fff" />
    <path d="M837 146l20 11-1 21-19 13-18-12-2-21z" fill="#f1f1f1" stroke="#888" strokeWidth=".8" />
    <path d="M837.500 169.500l19-11.500-1 20-18 12z" fill="#e6e6e6" />
    <path d="M817 158l20 11 20-12M837 169v22" stroke="#888" strokeWidth=".8" />
    <CubeText transform="translate(837 160) rotate(28)">SUPERIOR</CubeText>
    <CubeText transform="translate(826 176) rotate(31)">FRONTAL</CubeText>
    <CubeText transform="translate(848 176) rotate(-31)">DERECHA</CubeText>
    <path d="M811 165l4-4 3 3zM856 163l4-2 3 4z" fill="#eee" stroke="#aaa" />
    <path d="M806 198l5-6 5 1-4 6z" fill="#f4f4f4" stroke="#bbb" strokeWidth=".8" />
    <CubeText transform="translate(812 197) rotate(-40)">S</CubeText>
    <path d="M857 197l5-5 6 3-4 6z" fill="#ddd" stroke="#888" strokeWidth=".8" />
    <CubeText transform="translate(862 198) rotate(30)">E</CubeText>
  </g>
);

const Model = () => (
  <Drawing viewBox="202 117 686 396" preserveAspectRatio="xMinYMin meet" fill="none">
    <path d="M255 244L567 127L829 322V328L597 475M829 322L597 468" stroke="#666" strokeWidth="1" />
    <path d="M230 259L572 482" stroke="#666" strokeWidth="1" />
    <path d="M255 251L597 475" stroke="#999" strokeWidth="1" />
    {posts.map(([x, y]) => <Post key={x} x={x} y={y} />)}
    <path d="M255 245L597 468" stroke="#555" strokeWidth="1" />
    <path d="M255 245L597 468" stroke="#49b3e6" strokeWidth="1" strokeDasharray="3 4" />
    <path d="M225 160L568 383" stroke="#111" strokeWidth="1.300" />
    <path d="M224.500 160V248C225 257 230 260 236 260C244 260 249 251 255 245" stroke="#222" />
    <path d="M567.500 383V472C568 480 572 483 578 483.500C586 483 592 476 597 469" stroke="#111" strokeWidth="1.200" />
    <circle cx="255" cy="245" r="2.300" fill="#4c8fdb" stroke="#28598f" />
    <circle cx="597.500" cy="468" r="2.300" fill="#4c8fdb" stroke="#28598f" />
    <path d="M386 293l24 24M402 356h22" stroke="#888" />
    <path d="M374 289h2l2-7h5l-2 7h-5M377 282h7" stroke="#2d61c9" strokeWidth="1" />
    <path d="M382 285v7M385 286v6M381 290l1 2M384 287l1-2 1 2" stroke="#2d61c9" strokeWidth=".9" />
    <rect x="393.500" y="355.500" width="6" height="4" fill="#c9f3fb" stroke="#2d61c9" />
    <circle cx="400" cy="353" r="1.800" fill="#6a9ae8" stroke="#2d61c9" strokeWidth=".6" />
    <ViewCube />
  </Drawing>
);

const View = () => (
  <ViewArea>
    <ViewTabs>
      <ViewTab>
        <Icon name="house" size={9} />{'{3D}'}
        <Tool name="close" size={6} $w={13} $h={12} />
      </ViewTab>
      <CaretBox $w={9}><TabCaret /></CaretBox>
    </ViewTabs>
    <ViewBody>
      <Canvas>
        <Model />
        <NavBar>
          <NavDot />
          <Tool name="wheel" size={14} $w={16} $h={16} />
          <CaretBox><Caret $muted /></CaretBox>
          <NavRule />
          <Tool name="zoom" size={11} $w={12} $h={12} />
          <CaretBox><Caret $muted /></CaretBox>
          <NavDot />
        </NavBar>
      </Canvas>
      <ScrollColumn>
        <Chevron turn={180} />
        <Push $grow={11} />
        <Thumb />
        <Push $grow={10} />
        <Chevron />
      </ScrollColumn>
    </ViewBody>
    <ViewControls>
      <Scale type="button">1 : 500</Scale>
      {viewTools.map((n) => <Tool key={n} name={n} size={10} $w={12} $h={13} />)}
      <ScrollTrack>
        <Gap $w={3} />
        <Chevron turn={90} />
        <Push $grow={11} />
        <Thumb />
        <Push $grow={10} />
        <Chevron turn={270} />
      </ScrollTrack>
    </ViewControls>
  </ViewArea>
);

const Status = () => {
  const [option, setOption] = useState('Modelo base');

  return (
    <StatusBar>
      <Message>Imposible crear .</Message>
      <Tool name="workset" size={11} />
      <SelectBox>
        <select aria-label="Subproyecto activo"><option value="" /></select>
        <Chevron color="#999" />
      </SelectBox>
      <Gap $w={3} />
      <Tool name="editable" $w={14} />:0
      <Gap $w={11} />
      <Tool name="option" />
      <Tool name="optionOff" disabled />
      <Gap $w={2} />
      <SelectBox>
        <select aria-label="Opción de diseño" value={option} onChange={(e) => setOption(e.target.value)}>
          <option>Modelo base</option>
        </select>
        <Chevron color="#999" />
      </SelectBox>
      <Push />
      {['selLink', 'selUnder', 'selPin', 'selFace', 'drag', 'ring'].map((n) => <Tool key={n} name={n} />)}
      <Tool name="filter" $w={12} />:0
      <Gap $w={2} />
    </StatusBar>
  );
};

const App = () => {
  const [offset, setOffset] = useState('0.0');

  return (
    <Window>
      <GlobalStyle />
      <TitleRow />
      <TabBar>
        <Tab href="#archivo" $file>Archivo</Tab>
        {tabs.map((t) => <Tab key={t} href={`#${t}`}>{t}</Tab>)}
        <Tab href="#modificar" $active>Modificar | Colocar Componente</Tab>
        <Gap $w={10} />
        <Tool name="play" $h={12} />
        <Tools><CaretBox><Caret /></CaretBox></Tools>
      </TabBar>
      <RibbonBar />
      <OptionsBar>
        <Context>Modificar | Colocar Componente</Context>
        <label htmlFor="offset">Desfase:</label>
        <OffsetField id="offset" value={offset} onChange={(e) => setOffset(e.target.value)} />
        <Check id="lock" type="checkbox" />
        <label htmlFor="lock">Bloquear</label>
      </OptionsBar>
      <Workspace>
        <ProjectBrowser />
        <View />
      </Workspace>
      <Status />
      <Arrow width="54" height="56" viewBox="530 52 54 56">
        <path d="M584 52l-32 15 7 5-28 26 9 9 30-27 4 5z" fill="#696969" />
      </Arrow>
    </Window>
  );
};

export default App;
